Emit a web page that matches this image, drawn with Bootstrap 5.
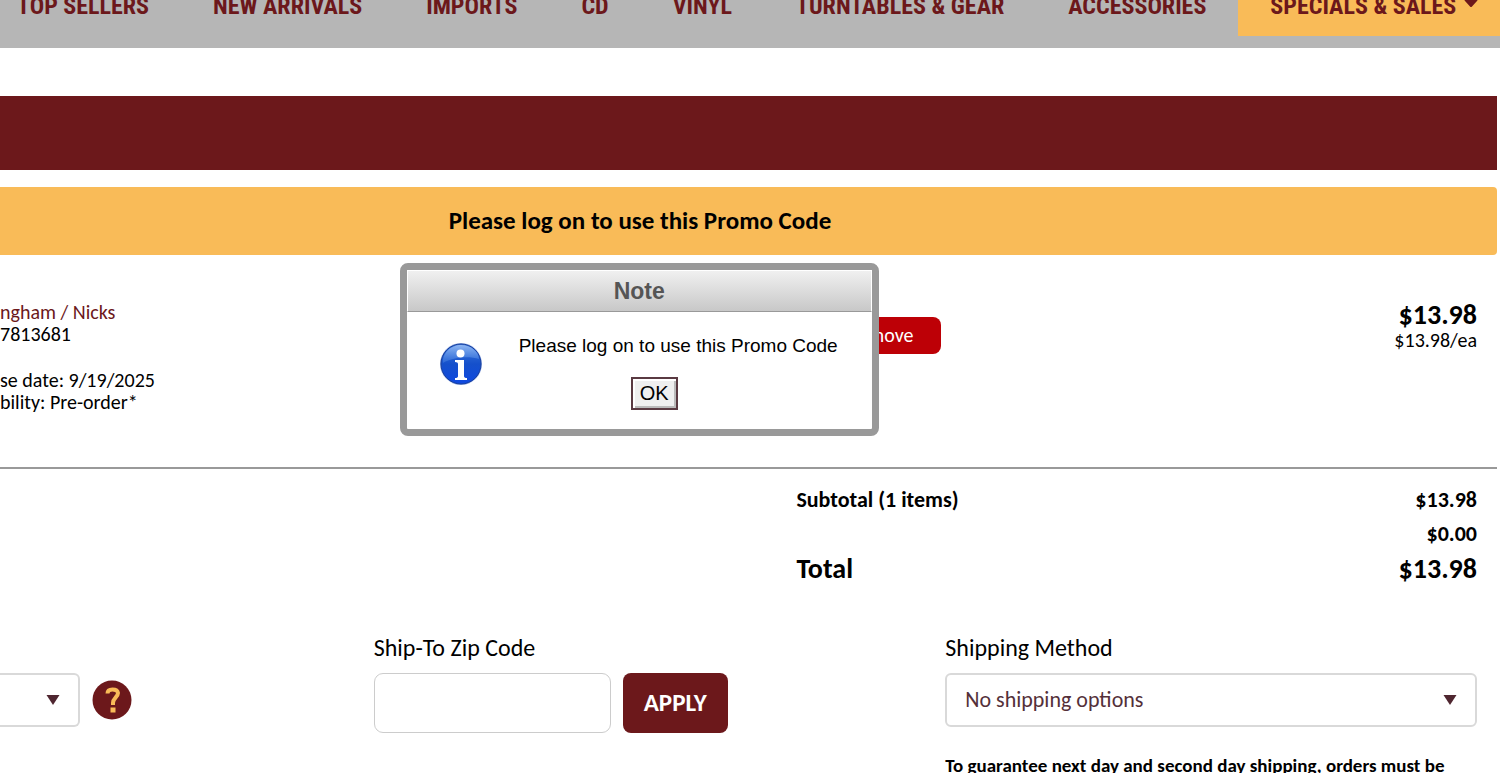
<!DOCTYPE html>
<html lang="en">
<head>
<meta charset="utf-8">
<meta name="viewport" content="width=device-width, initial-scale=1">
<title>Shopping Cart</title>
<link href="https://cdn.jsdelivr.net/npm/bootstrap@5.3.0/dist/css/bootstrap.min.css" rel="stylesheet">
<style>
  :root { --wine: #6c181b; --amber: #f9bb58; --silver: #b6b6b6; --rule: #999; }
  body { font-family: Carlito, Lato, sans-serif; font-size: 20px; line-height: 22px; color: #000; background: #fff; height: 100vh; overflow: hidden; }
  .site-nav { background: var(--silver); height: 48px; overflow: hidden; }
  .site-nav .nav { margin-top: -24px; margin-left: -15px; }
  .site-nav .nav-link { font: 700 24px/60px "Roboto Condensed", Carlito, sans-serif; padding: 0 32px; color: var(--wine); white-space: nowrap; }
  .site-nav .nav-item:last-child { background: var(--amber); }
  .site-nav .nav-link svg { margin: -8px 0 0 8px; }
  .page-body { padding: 48px 3px 0 0; }
  .title-band { background: var(--wine); height: 74px; }
  .promo-alert { background: var(--amber); color: #000; border-radius: 0 4px 4px 0; font-size: 25px; line-height: 32px; padding: 18px 217px 18px 0; margin: 17px 0 0; }
  .cart-item { border-bottom: 2px solid var(--rule); padding: 46px 20px 54px 0; min-height: 213px; }
  .cart-item a { color: var(--wine); }
  .item-info { flex: 0 0 55.5%; }
  .btn-remove { background: #bd0006; color: #fff; font-size: 20px; line-height: 25px; padding: 6px 28px; border-radius: 8px; margin-top: 16px; }
  .price-lg { font-size: 28px; line-height: 28px; font-weight: 700; }
  .note-box { left: 26.7%; top: 8px; width: 479px; border: 7px solid var(--rule); border-radius: 8px; background: #fff; font-family: "Liberation Sans", Arial, sans-serif; }
  .note-title { font-size: 23px; line-height: 40px; color: #555; font-weight: 700; margin: 0; border: 1px solid #fff; border-bottom: 1px solid var(--rule); background: linear-gradient(#f0f0f0, #c8c8c8); }
  .note-body { padding: 20px 32px 19px; gap: 36px; }
  .note-icon { margin-top: 10px; }
  .note-text { font-size: 20px; line-height: 28px; }
  .note-text p { font-size: 19px; margin: 0 0 17px; }
  .btn-ok { font-size: 20px; line-height: 25px; padding: 2px 7px; border: 2px solid #5a3a42; border-radius: 0; background: #efefef; color: #000; box-shadow: inset 2px 2px #fff, inset -2px -2px #bbb; }
  .btn-ok:hover { background: #e4e4e4; color: #000; }
  .totals { margin-left: 53.2%; padding: 14px 20px 0 0; font-size: 22px; }
  .totals dt, .totals dd { margin: 0; font-weight: 700; line-height: 34px; }
  .totals .price-lg { line-height: 36px; }
  .ship-form { display: grid; grid-template-columns: 25.3% 38.7% 1fr; padding: 46px 20px 0 0; }
  .ship-form label { font-size: 24px; line-height: 30px; margin-bottom: 10px; min-height: 30px; }
  .ship-form .form-select { height: 54px; padding: 0 60px 2px 18px; font-size: 22px; color: #543039; border: 2px solid #d9d9d9; border-radius: 6px; background-size: 14px 10px; background-position: right 18px center; background-image: url("data:image/svg+xml,%3csvg xmlns='http://www.w3.org/2000/svg' viewBox='0 0 14 10'%3e%3cpath fill='%234f2630' d='M0.5 0h13L7 10z'/%3e%3c/svg%3e"); }
  .ship-form .country { width: 80px; border-left: 0; border-radius: 0 6px 6px 0; }
  .ship-form .form-control { width: 237px; height: 60px; border: 1px solid #ccc; border-radius: 9px; font-size: 22px; }
  .btn-apply { background: var(--wine); color: #fff; font-size: 25px; font-weight: 700; line-height: 30px; height: 60px; padding: 0 21px; border-radius: 8px; }
  .btn-apply:hover, .btn-remove:hover { background: #52090c; color: #fff; }
  .cutoff { font-size: 19px; line-height: 24px; margin: 27px 0 0; }
</style>
</head>
<body>
<header class="site-nav">
  <ul class="nav flex-nowrap">
    <li class="nav-item"><a class="nav-link" href="#">TOP SELLERS</a></li>
    <li class="nav-item"><a class="nav-link" href="#">NEW ARRIVALS</a></li>
    <li class="nav-item"><a class="nav-link" href="#">IMPORTS</a></li>
    <li class="nav-item"><a class="nav-link" href="#">CD</a></li>
    <li class="nav-item"><a class="nav-link" href="#">VINYL</a></li>
    <li class="nav-item"><a class="nav-link" href="#">TURNTABLES &amp; GEAR</a></li>
    <li class="nav-item"><a class="nav-link" href="#">ACCESSORIES</a></li>
    <li class="nav-item flex-grow-1"><a class="nav-link" href="#">SPECIALS &amp; SALES<svg width="14" height="9" viewBox="0 0 14 9" aria-hidden="true"><path d="M1 0h12q1 1 0 2L8 7.500q-1 1-2 0L1 2q-1-1 0-2z" fill="#6c181b"/></svg></a></li>
  </ul>
</header>

<main class="page-body">
  <div class="title-band"></div>
  <div class="promo-alert text-center fw-bold" role="alert">Please log on to use this Promo Code</div>

  <section class="cart-item position-relative d-flex align-items-start">
    <div class="item-info">
      <div><a class="text-decoration-none" href="#">ngham / Nicks</a></div>
      <div class="mb-4">7813681</div>
      <div>se date: 9/19/2025</div>
      <div>bility: Pre-order*</div>
    </div>
    <button type="button" class="btn btn-remove border-0">Remove</button>
    <div class="ms-auto text-end">
      <div class="price-lg">$13.98</div>
      <div>$13.98/ea</div>
    </div>

    <div class="note-box position-absolute" role="dialog" aria-labelledby="noteTitle">
      <h2 class="note-title text-center" id="noteTitle">Note</h2>
      <div class="note-body d-flex align-items-start">
        <svg width="44" height="44" viewBox="0 0 44 44" class="note-icon flex-shrink-0" aria-hidden="true">
          <defs>
            <linearGradient id="ball" x1="0" y1="0" x2="0" y2="1"><stop offset="0" stop-color="#3c78dc"/><stop offset=".5" stop-color="#1550cb"/><stop offset="1" stop-color="#0f48e0"/></linearGradient>
            <linearGradient id="shine" x1="0" y1="0" x2="0" y2="1"><stop offset="0" stop-color="#8fb6f2"/><stop offset="1" stop-color="#3f7be0" stop-opacity=".5"/></linearGradient>
          </defs>
          <circle cx="22" cy="22" r="21" fill="#9fb4e4"/>
          <circle cx="22" cy="22" r="20" fill="url(#ball)" stroke="#173f9e" stroke-width="1"/>
          <path d="M4 21C3 11 12 3 22 3s18 7 18 14c-10-3-26-2-36 4z" fill="url(#shine)"/>
          <circle cx="21.500" cy="11.500" r="4" fill="#fff"/>
          <path d="M16 18h9v16q0 2 3 2v2H16v-2q3 0 3-2V22q0-2-3-2z" fill="#fff"/>
        </svg>
        <div class="note-text text-center">
          <p>Please log on to use this Promo Code</p>
          <button type="button" class="btn btn-ok me-5">OK</button>
        </div>
      </div>
    </div>
  </section>

  <dl class="totals mb-0">
    <div class="d-flex justify-content-between"><dt>Subtotal (1 items)</dt><dd>$13.98</dd></div>
    <div class="d-flex justify-content-end"><dd>$0.00</dd></div>
    <div class="d-flex justify-content-between"><dt class="price-lg">Total</dt><dd class="price-lg">$13.98</dd></div>
  </dl>

  <form class="ship-form">
    <div>
      <label class="d-block" for="country"></label>
      <div class="d-flex align-items-center">
        <select class="form-select country" id="country" aria-label="Country"><option></option></select>
        <button type="button" class="btn p-0 border-0 ms-2 ps-1" aria-label="Help">
          <svg width="40" height="40" viewBox="0 0 40 40" class="d-block" aria-hidden="true"><circle cx="20" cy="20" r="19.500" fill="#6c181b"/><path d="M15.500 13.500q0-4 5-4t5.500 3.500c0 4-5 5-5 10v2" fill="none" stroke="#f9bb58" stroke-width="4"/><rect x="18.500" y="27.500" width="5" height="5" fill="#f9bb58"/></svg>
        </button>
      </div>
    </div>
    <div>
      <label class="d-block" for="zip">Ship-To Zip Code</label>
      <div class="d-flex">
        <input class="form-control me-2" type="text" id="zip">
        <button type="button" class="btn btn-apply border-0 ms-1">APPLY</button>
      </div>
    </div>
    <div>
      <label class="d-block" for="method">Shipping Method</label>
      <select class="form-select" id="method"><option>No shipping options</option></select>
      <p class="cutoff fw-bold">To guarantee next day and second day shipping, orders must be</p>
    </div>
  </form>
</main>
<script src="https://cdn.jsdelivr.net/npm/bootstrap@5.3.0/dist/js/bootstrap.bundle.min.js"></script>
</body>
</html>
